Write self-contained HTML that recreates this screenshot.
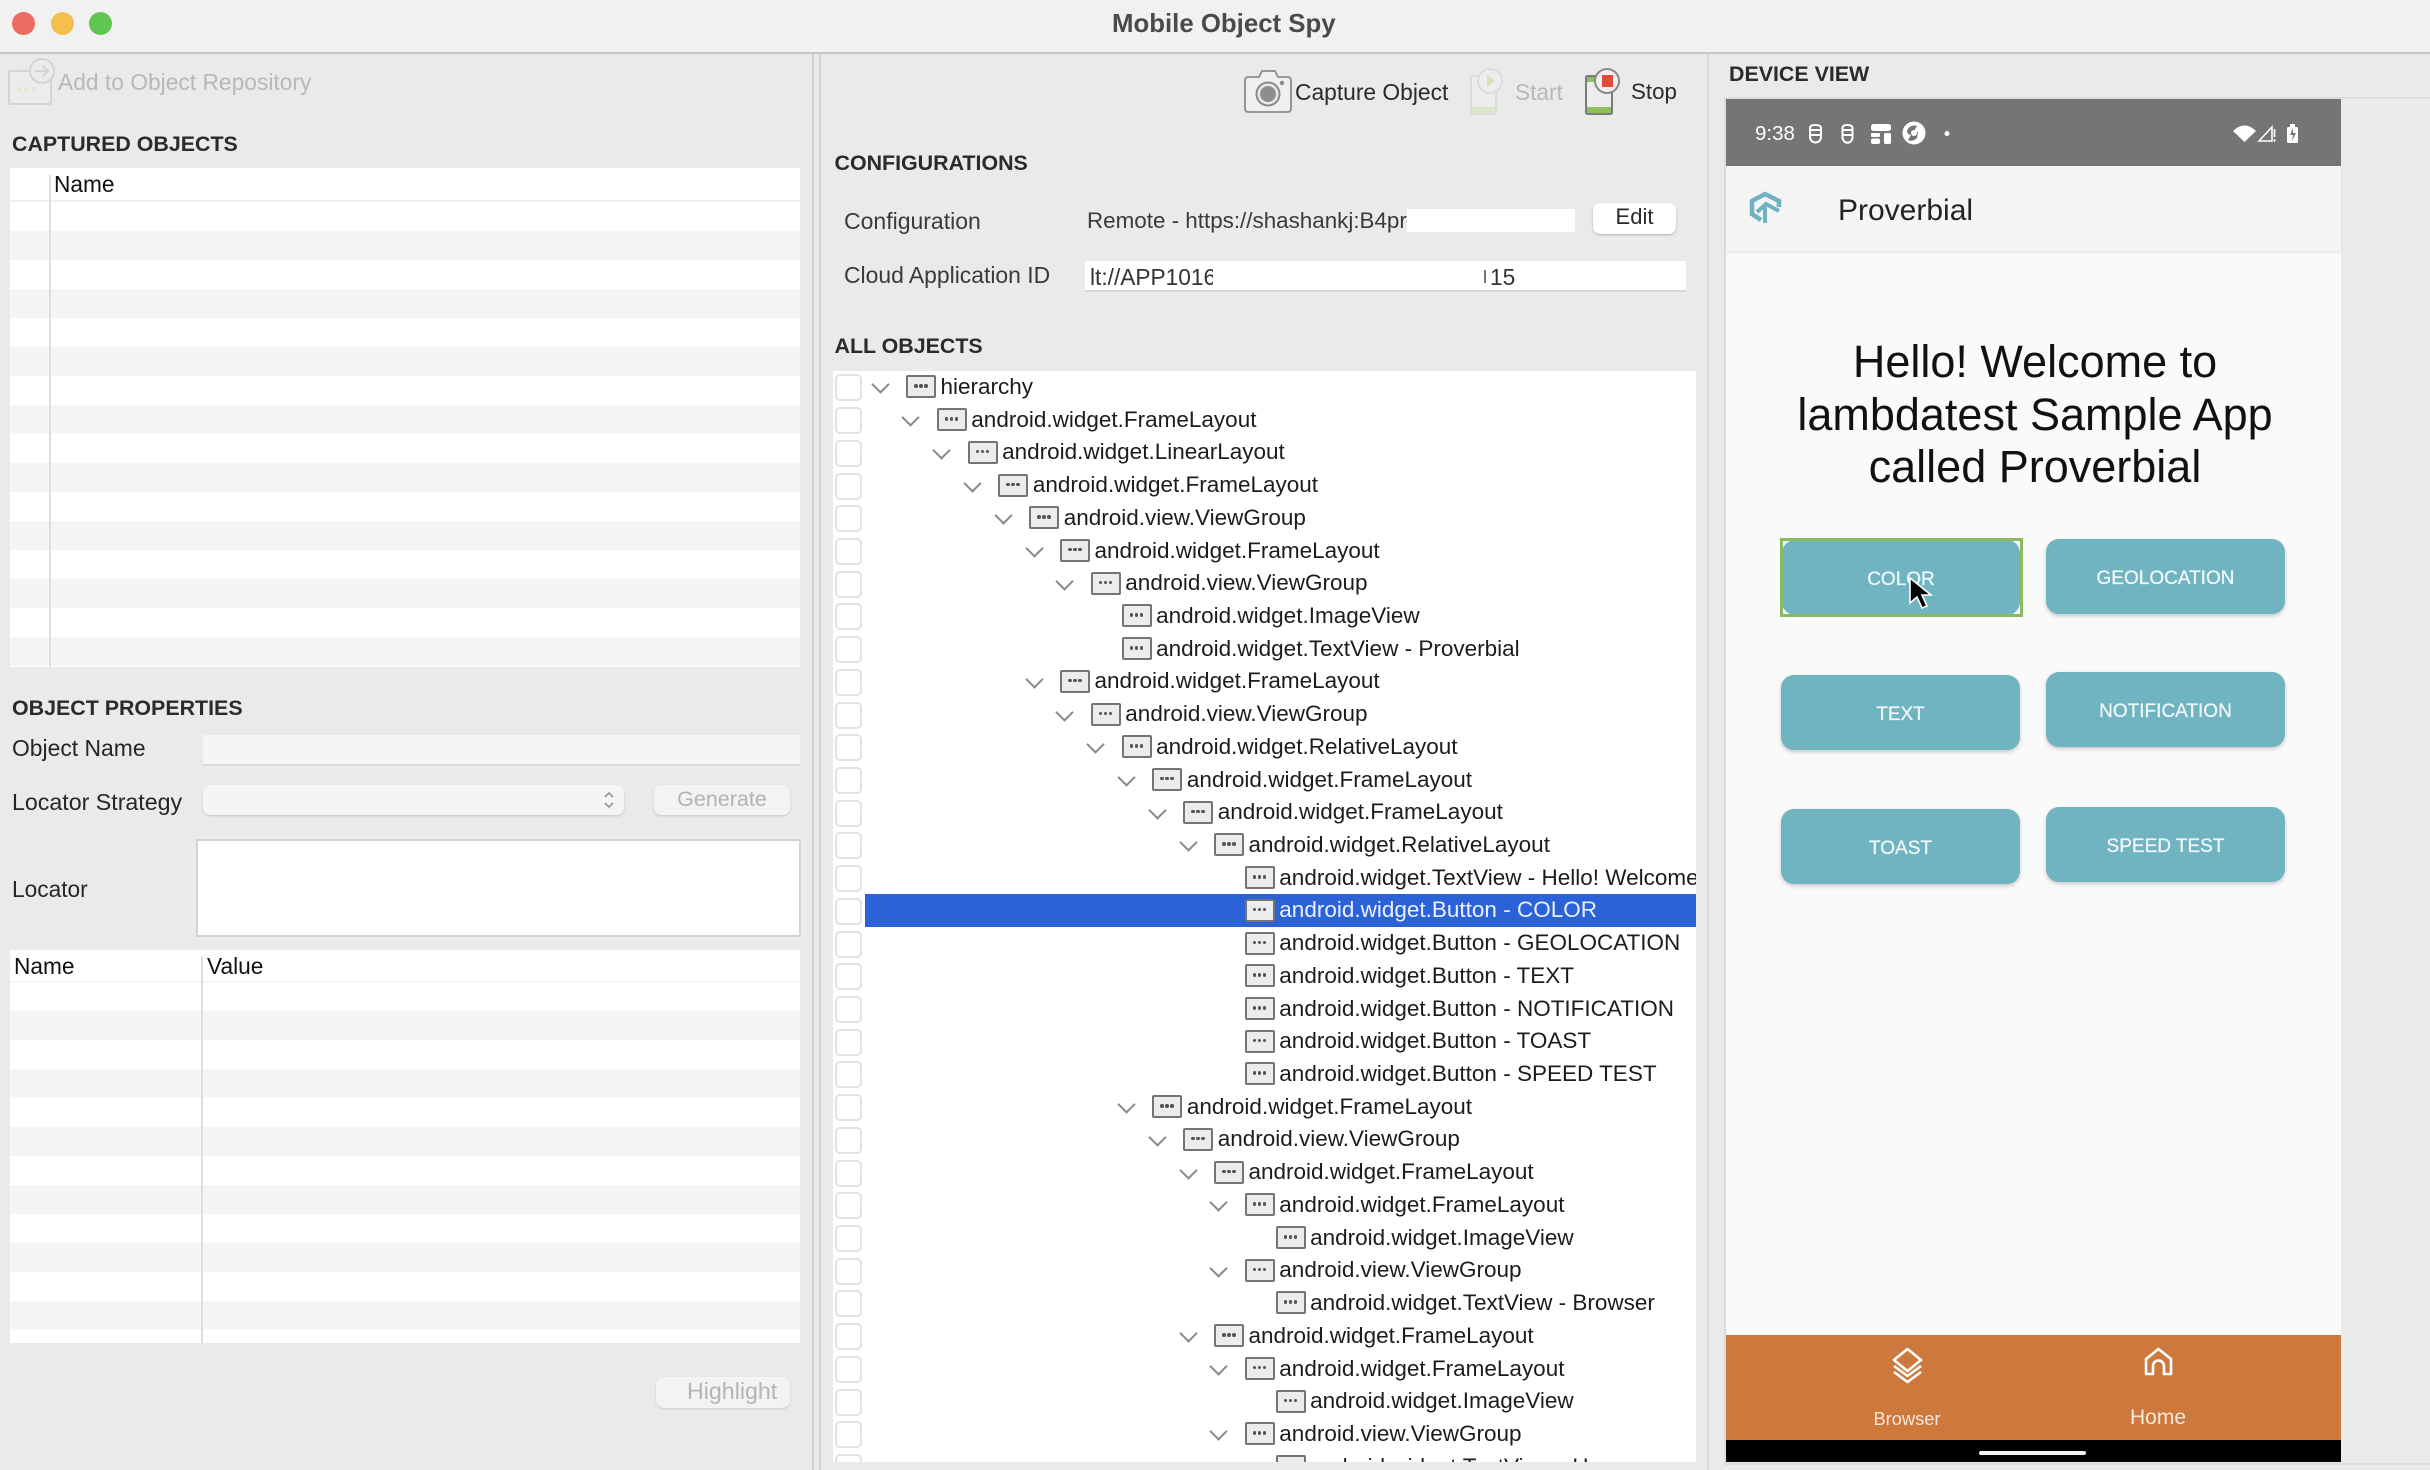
<!DOCTYPE html>
<html lang="en"><head><meta charset="utf-8"><title>Mobile Object Spy</title>
<style>
*{box-sizing:border-box}
html,body{margin:0;padding:0}
body{width:2430px;height:1470px;position:relative;overflow:hidden;background:#eaeaea;font-family:"Liberation Sans",sans-serif;color:#262626}
.a{position:absolute}
.t{position:absolute;white-space:nowrap;line-height:30px;font-size:22.7px}
.h{position:absolute;white-space:nowrap;line-height:30px;font-size:21.4px;font-weight:bold;color:#2b2b2b}
.tb{position:absolute;left:10px;width:790px;background:#fff}
.stripes{position:absolute;left:10px;width:790px;background:repeating-linear-gradient(#fff 0 29px,#f5f5f5 29px 58px)}
#tree{position:absolute;left:833px;top:371px;width:863px;height:1091px;background:#fff;overflow:hidden}
#tree .in{margin-top:-.66px}
.r{position:relative;height:32.73px;--d:0}
.r>*{position:absolute}
.r::before{content:"";position:absolute;left:2px;top:4px;width:23px;height:23px;background:#fff;border:2px solid #e2e2e2;border-radius:5px}
.c::after{content:"";position:absolute;left:calc(40.5px + 30.8px*var(--d));top:8px;width:11px;height:11px;border-right:2px solid #8a8a8a;border-bottom:2px solid #8a8a8a;transform:rotate(45deg)}
.i{left:calc(73px + 30.8px*var(--d));top:5px;width:30px;height:23px;background:#ececec;border:2px solid #747474;border-radius:2px}
.i::after{content:"";position:absolute;left:11px;top:7px;width:3.5px;height:3.5px;border-radius:50%;background:#555;box-shadow:-5px 0 0 #555,5px 0 0 #555}
.x{left:calc(107.5px + 30.8px*var(--d));top:.6px;line-height:32.73px;font-size:22.5px;color:#1c1c1c;white-space:nowrap}
.sel .bar{left:32px;right:0;top:0;bottom:0;background:#2b62d8}
.sel .x{color:#eaf0ff}
.btn{position:absolute;background:#70b3c1;border-radius:13px;box-shadow:0 2px 4px rgba(0,0,0,.2);color:#eef7f9;font-size:19px;text-align:center;line-height:79px;width:239px;height:75px;-webkit-text-stroke:.3px #eef7f9}
</style></head><body>

<!-- title bar -->
<div class="a" style="left:0;top:0;width:2430px;height:52px;background:#f1f1f1"></div>
<div class="a" style="left:0;top:52px;width:2430px;height:2px;background:#c6c6c6"></div>
<div class="a" style="left:12px;top:12px;width:23px;height:23px;border-radius:50%;background:#ec6a5e"></div>
<div class="a" style="left:51px;top:12px;width:23px;height:23px;border-radius:50%;background:#f4bf4f"></div>
<div class="a" style="left:89px;top:12px;width:23px;height:23px;border-radius:50%;background:#61c554"></div>
<div class="t" style="left:1112px;top:9px;font-size:25.8px;font-weight:bold;color:#4a4a4a">Mobile Object Spy</div>

<!-- dividers -->
<div class="a" style="left:812px;top:54px;width:2px;height:1416px;background:#d2d2d2"></div>
<div class="a" style="left:819px;top:54px;width:2px;height:1416px;background:#d2d2d2"></div>
<div class="a" style="left:1707px;top:54px;width:2px;height:1416px;background:#d6d6d6"></div>

<!-- add to repo -->
<svg class="a" style="left:6px;top:56px" width="50" height="52" viewBox="0 0 50 52">
<rect x="3" y="15" width="42" height="33" rx="1.5" fill="#ececec" stroke="#d4d4d4" stroke-width="2"/>
<circle cx="36" cy="15" r="12" fill="#ebebeb" stroke="#d4d4d4" stroke-width="2"/>
<path d="M29 15h13M37 10l5 5-5 5" fill="none" stroke="#d4d4d4" stroke-width="2"/>
<circle cx="13" cy="33" r="2" fill="#dfe8d2"/><circle cx="20" cy="33" r="2" fill="#dfe8d2"/><circle cx="27" cy="33" r="2" fill="#dfe8d2"/>
</svg>
<div class="t" style="left:58px;top:67px;color:#b8b8b8;font-size:22.8px">Add to Object Repository</div>

<div class="h" style="left:12px;top:129px">CAPTURED OBJECTS</div>
<div class="tb" style="top:168px;height:34px;border-bottom:2px solid #efefef"></div>
<div class="stripes" style="top:202px;height:465px"></div>
<div class="a" style="left:49px;top:175px;width:1.5px;height:492px;background:#dedede"></div>
<div class="t" style="left:54px;top:169px;color:#111">Name</div>

<div class="h" style="left:12px;top:693px">OBJECT PROPERTIES</div>
<div class="t" style="left:12px;top:733px;font-size:22.9px">Object Name</div>
<div class="a" style="left:203px;top:735px;width:597px;height:31px;background:#f5f5f5;border-bottom:2px solid #dcdcdc"></div>
<div class="t" style="left:12px;top:787px;font-size:23.2px">Locator Strategy</div>
<div class="a" style="left:203px;top:785px;width:421px;height:30px;background:#f5f5f5;border-radius:7px;box-shadow:0 1px 2px rgba(0,0,0,.16)"></div>
<svg class="a" style="left:602px;top:790px" width="14" height="20" viewBox="0 0 14 20"><path d="M3 7l4-4 4 4M3 13l4 4 4-4" fill="none" stroke="#9a9a9a" stroke-width="1.8"/></svg>
<div class="a" style="left:654px;top:785px;width:136px;height:30px;background:#f3f3f3;border-radius:7px;box-shadow:0 1px 2px rgba(0,0,0,.16);text-align:center;line-height:28px;font-size:21.5px;color:#b2b2b2">Generate</div>
<div class="t" style="left:12px;top:874px">Locator</div>
<div class="a" style="left:196px;top:839px;width:605px;height:98px;background:#fff;border:2px solid #d3d3d3"></div>

<div class="tb" style="top:950px;height:33px;border-bottom:2px solid #efefef"></div>
<div class="stripes" style="top:982px;height:361px"></div>
<div class="a" style="left:201px;top:956px;width:1.5px;height:387px;background:#dedede"></div>
<div class="t" style="left:14px;top:951px;color:#111">Name</div>
<div class="t" style="left:207px;top:951px;color:#111">Value</div>
<div class="a" style="left:656px;top:1377px;width:134px;height:31px;background:#f3f3f3;border-radius:8px;box-shadow:0 1px 2px rgba(0,0,0,.14)"></div>
<div class="t" style="left:687px;top:1376px;color:#b4b4b4;font-size:23.2px">Highlight</div>

<!-- toolbar -->
<svg class="a" style="left:1243px;top:68px" width="50" height="46" viewBox="0 0 50 46">
<path d="M5 9h11l3-6h13l3 6h10a3 3 0 0 1 3 3v29a3 3 0 0 1-3 3H5a3 3 0 0 1-3-3V12a3 3 0 0 1 3-3z" fill="#efefef" stroke="#8c8c8c" stroke-width="1.8"/>
<circle cx="25" cy="26" r="11.5" fill="#e8e8e8" stroke="#8a8a8a" stroke-width="2"/>
<circle cx="25" cy="26" r="8" fill="#8d8d8d"/>
<circle cx="39" cy="15" r="2.2" fill="#8a8a8a"/>
</svg>
<div class="t" style="left:1295px;top:77px;color:#2a2a2a;font-size:22.8px">Capture Object</div>
<svg class="a" style="left:1468px;top:67px" width="40" height="50" viewBox="0 0 40 50">
<rect x="3" y="9" width="25" height="38" rx="1.5" fill="#ededed" stroke="#dcdcdc" stroke-width="2"/>
<rect x="4" y="40" width="23" height="6" fill="#d9e6c8"/>
<circle cx="22" cy="14" r="12" fill="#ededed" stroke="#dcdcdc" stroke-width="2"/>
<path d="M19 8l8 6-8 6z" fill="#d2e2bd"/>
</svg>
<div class="t" style="left:1515px;top:77px;color:#b8b8b8">Start</div>
<svg class="a" style="left:1583px;top:67px" width="40" height="50" viewBox="0 0 40 50">
<rect x="3" y="9" width="26" height="38" rx="1.5" fill="#ededed" stroke="#7b7b7b" stroke-width="2"/>
<rect x="4" y="40" width="24" height="6" fill="#8fc05f"/>
<rect x="4" y="10" width="8" height="5" fill="#8fc05f"/>
<circle cx="24" cy="14" r="12" fill="#efefef" stroke="#8a8a8a" stroke-width="2"/>
<rect x="19" y="8" width="11" height="12" fill="#e2493c"/>
</svg>
<div class="t" style="left:1631px;top:77px;color:#2a2a2a;font-size:22.3px">Stop</div>

<div class="h" style="left:834.500px;top:148px">CONFIGURATIONS</div>
<div class="t" style="left:844px;top:206px;color:#3a3a3a;font-size:23px">Configuration</div>
<div class="t" style="left:1087px;top:206px;width:320px;overflow:hidden;color:#3a3a3a;font-size:22.4px">Remote - https://shashankj:B4pr</div>
<div class="a" style="left:1407px;top:209px;width:168px;height:23px;background:#fff"></div>
<div class="a" style="left:1593px;top:203px;width:83px;height:31px;background:#fff;border-radius:7px;box-shadow:0 1px 2px rgba(0,0,0,.25);text-align:center;line-height:28px;font-size:22px;color:#2a2a2a">Edit</div>
<div class="t" style="left:844px;top:260px;color:#3a3a3a;font-size:22.9px">Cloud Application ID</div>
<div class="a" style="left:1085px;top:261px;width:601px;height:31px;background:#fff;border-bottom:2px solid #d6d6d6"></div>
<div class="t" style="left:1090px;top:262px;width:123px;overflow:hidden;color:#333">lt://APP10168</div>
<div class="a" style="left:1484px;top:270px;width:1.5px;height:13px;background:#777"></div>
<div class="t" style="left:1490px;top:262px;color:#333">15</div>

<div class="h" style="left:834.500px;top:331px">ALL OBJECTS</div>

<div id="tree"><div class="in">
<div class="r c" style="--d:0"><i class="i"></i><span class="x">hierarchy</span></div>
<div class="r c" style="--d:1"><i class="i"></i><span class="x">android.widget.FrameLayout</span></div>
<div class="r c" style="--d:2"><i class="i"></i><span class="x">android.widget.LinearLayout</span></div>
<div class="r c" style="--d:3"><i class="i"></i><span class="x">android.widget.FrameLayout</span></div>
<div class="r c" style="--d:4"><i class="i"></i><span class="x">android.view.ViewGroup</span></div>
<div class="r c" style="--d:5"><i class="i"></i><span class="x">android.widget.FrameLayout</span></div>
<div class="r c" style="--d:6"><i class="i"></i><span class="x">android.view.ViewGroup</span></div>
<div class="r" style="--d:7"><i class="i"></i><span class="x">android.widget.ImageView</span></div>
<div class="r" style="--d:7"><i class="i"></i><span class="x">android.widget.TextView - Proverbial</span></div>
<div class="r c" style="--d:5"><i class="i"></i><span class="x">android.widget.FrameLayout</span></div>
<div class="r c" style="--d:6"><i class="i"></i><span class="x">android.view.ViewGroup</span></div>
<div class="r c" style="--d:7"><i class="i"></i><span class="x">android.widget.RelativeLayout</span></div>
<div class="r c" style="--d:8"><i class="i"></i><span class="x">android.widget.FrameLayout</span></div>
<div class="r c" style="--d:9"><i class="i"></i><span class="x">android.widget.FrameLayout</span></div>
<div class="r c" style="--d:10"><i class="i"></i><span class="x">android.widget.RelativeLayout</span></div>
<div class="r" style="--d:11"><i class="i"></i><span class="x">android.widget.TextView - Hello! Welcome to lambdatest</span></div>
<div class="r sel" style="--d:11"><b class="bar"></b><i class="i"></i><span class="x">android.widget.Button - COLOR</span></div>
<div class="r" style="--d:11"><i class="i"></i><span class="x">android.widget.Button - GEOLOCATION</span></div>
<div class="r" style="--d:11"><i class="i"></i><span class="x">android.widget.Button - TEXT</span></div>
<div class="r" style="--d:11"><i class="i"></i><span class="x">android.widget.Button - NOTIFICATION</span></div>
<div class="r" style="--d:11"><i class="i"></i><span class="x">android.widget.Button - TOAST</span></div>
<div class="r" style="--d:11"><i class="i"></i><span class="x">android.widget.Button - SPEED TEST</span></div>
<div class="r c" style="--d:8"><i class="i"></i><span class="x">android.widget.FrameLayout</span></div>
<div class="r c" style="--d:9"><i class="i"></i><span class="x">android.view.ViewGroup</span></div>
<div class="r c" style="--d:10"><i class="i"></i><span class="x">android.widget.FrameLayout</span></div>
<div class="r c" style="--d:11"><i class="i"></i><span class="x">android.widget.FrameLayout</span></div>
<div class="r" style="--d:12"><i class="i"></i><span class="x">android.widget.ImageView</span></div>
<div class="r c" style="--d:11"><i class="i"></i><span class="x">android.view.ViewGroup</span></div>
<div class="r" style="--d:12"><i class="i"></i><span class="x">android.widget.TextView - Browser</span></div>
<div class="r c" style="--d:10"><i class="i"></i><span class="x">android.widget.FrameLayout</span></div>
<div class="r c" style="--d:11"><i class="i"></i><span class="x">android.widget.FrameLayout</span></div>
<div class="r" style="--d:12"><i class="i"></i><span class="x">android.widget.ImageView</span></div>
<div class="r c" style="--d:11"><i class="i"></i><span class="x">android.view.ViewGroup</span></div>
<div class="r" style="--d:12"><i class="i"></i><span class="x">android.widget.TextView - Home</span></div>
</div></div>

<!-- device view -->
<div class="h" style="left:1729px;top:59px">DEVICE VIEW</div>
<div class="a" style="left:1724px;top:97px;width:706px;height:1368px;border:2px solid #dcdcdc;border-right:0;background:#ebebeb"></div>
<div class="a" style="left:1726px;top:99px;width:615px;height:1363px;background:#fafafa;overflow:hidden"></div>
<div class="a" style="left:1726px;top:99px;width:615px;height:67px;background:#757575"></div>
<div class="t" style="left:1755px;top:119px;color:#fff;font-size:20.500px">9:38</div>
<svg class="a" style="left:1800px;top:118px" width="520" height="32" viewBox="1800 118 520 32">
<g fill="none" stroke="#fff" stroke-width="2">
<path d="M1810 129v-1q0-3 5-3q6 0 6 3v1M1809 130h13M1810 130v5M1821 130v5M1809.500 135h12M1810 135v2a5.500 5.500 0 0 0 11 0v-2"/>
<path d="M1842.500 129v-1q0-3 4.500-3q5.500 0 5.500 3v1M1841.500 130h12M1842.500 130v5M1852.500 130v5M1842 135h11M1842.500 135v2a4.800 5.500 0 0 0 10 0v-2"/>
</g>
<g fill="#fff"><rect x="1871" y="124" width="20" height="7" rx="2.500"/><rect x="1871" y="133" width="9" height="4" rx="1"/><rect x="1871" y="138.500" width="9" height="5.500" rx="2"/><rect x="1884" y="133" width="7" height="11" rx="1.500"/></g>
<circle cx="1914" cy="133" r="11.500" fill="#fff"/><path d="M1907 131a7.500 7.500 0 0 1 10-5l-3 5 4 1-1 6a7.500 7.500 0 0 1-9 2l3-5-3-1z" fill="#757575"/><circle cx="1914" cy="133" r="3" fill="#fff"/>
<circle cx="1947" cy="133.500" r="2.500" fill="#fff"/>
<path d="M2233 131Q2244.500 120 2256 131L2244.500 142z" fill="#fff"/>
<path d="M2259 141l13-14v14z" fill="none" stroke="#fff" stroke-width="1.600"/><path d="M2274.500 129v8M2274.500 139v3" stroke="#fff" stroke-width="1.600"/>
<rect x="2287" y="127" width="11" height="16" rx="1.500" fill="#fff"/><rect x="2290" y="124" width="5" height="3" fill="#fff"/><path d="M2293 128l-3 7h3l-1 6 4-8h-3z" fill="#757575"/>
</svg>
<div class="a" style="left:1726px;top:166px;width:615px;height:85px;background:#f5f5f5;box-shadow:0 2px 3px rgba(0,0,0,.07)"></div>
<svg class="a" style="left:1748px;top:190px" width="36" height="36" viewBox="0 0 36 36">
<path d="M31 17V11L17 4 4 11V24L13 30" fill="none" stroke="#6fb2c2" stroke-width="4.500"/>
<path d="M17 33V17M9 22L18 14 31 21" fill="none" stroke="#6fb2c2" stroke-width="4"/>
</svg>
<div class="t" style="left:1838px;top:195.500px;font-size:30px;color:#232323">Proverbial</div>
<div class="a" style="left:1726px;top:336px;width:618px;text-align:center;font-size:45px;line-height:52.600px;color:#111">Hello! Welcome to<br>lambdatest Sample App<br>called Proverbial</div>

<div class="btn" style="left:1782px;top:540px;width:238px;height:75px;box-shadow:none">COLOR</div>
<div class="a" style="left:1780px;top:538px;width:243px;height:79px;border:3.500px solid #8aba63"></div>
<div class="btn" style="left:2046px;top:539px">GEOLOCATION</div>
<div class="btn" style="left:1781px;top:675px">TEXT</div>
<div class="btn" style="left:2046px;top:672px">NOTIFICATION</div>
<div class="btn" style="left:1781px;top:809px">TOAST</div>
<div class="btn" style="left:2046px;top:807px">SPEED TEST</div>
<svg class="a" style="left:1906px;top:574px" width="28" height="38" viewBox="0 0 28 38"><path d="M4 4v25l7-6 5 11 5-2-5-11h9z" fill="#000" stroke="#fff" stroke-width="1.600"/></svg>

<div class="a" style="left:1726px;top:1335px;width:615px;height:105px;background:#cd783c"></div>
<div class="a" style="left:1726px;top:1440px;width:615px;height:22px;background:#000"></div>
<div class="a" style="left:1979px;top:1451px;width:107px;height:4px;border-radius:2px;background:#f2f2f2"></div>
<svg class="a" style="left:1888px;top:1345px" width="40" height="40" viewBox="0 0 40 40">
<path d="M19.500 4L33 15 19.500 26 6 15z" fill="none" stroke="#fff" stroke-width="2.600" stroke-linejoin="round"/>
<path d="M6 21l13.500 10L33 21M6 27l13.500 10L33 27" fill="none" stroke="#fff" stroke-width="2.600" stroke-linejoin="round"/>
</svg>
<svg class="a" style="left:2142px;top:1346px" width="34" height="32" viewBox="0 0 34 32">
<path d="M4 28V13L16.500 3 29 13v15h-7v-8a5.500 5.500 0 0 0-11 0v8z" fill="none" stroke="#fff" stroke-width="2.600" stroke-linejoin="round"/>
</svg>
<div class="t" style="left:1873px;top:1404px;width:68px;text-align:center;font-size:18.300px;color:#f7e8dc">Browser</div>
<div class="t" style="left:2128px;top:1403px;width:60px;text-align:center;font-size:21px;color:#f7e8dc">Home</div>

</body></html>
